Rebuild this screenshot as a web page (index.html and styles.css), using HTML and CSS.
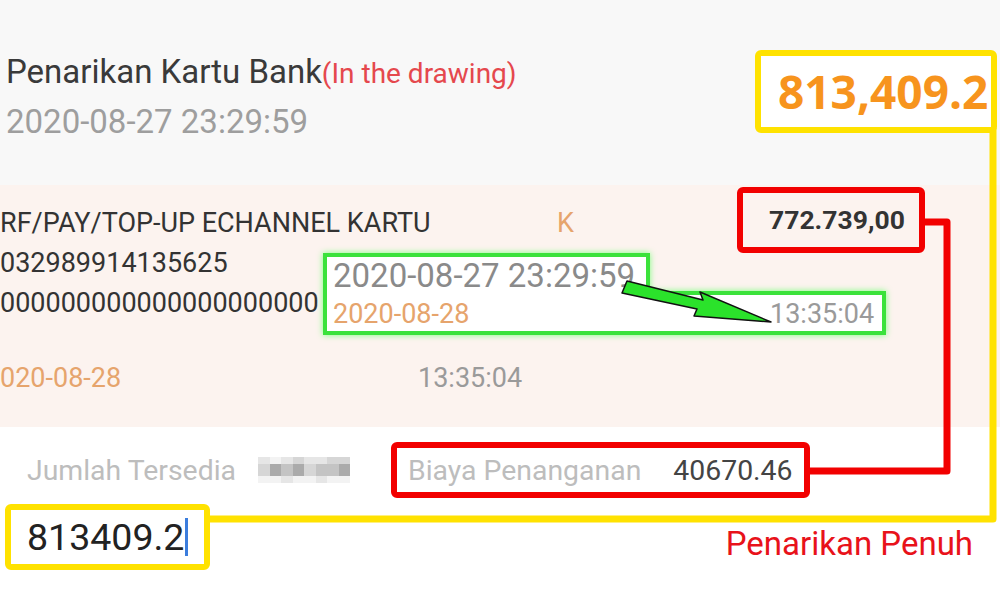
FILE: index.html
```html
<!DOCTYPE html>
<html lang="id">
<head>
  <meta charset="UTF-8">
  <meta name="viewport" content="width=device-width, initial-scale=1">
  <title>Penarikan Kartu Bank</title>
  <link rel="stylesheet" href="styles.css">
</head>
<body>
  <div class="screen">
    <header class="head">
      <div class="title">Penarikan Kartu Bank<span class="note">(In the drawing)</span></div>
      <div class="stamp">2020-08-27 23:29:59</div>
    </header>

    <section class="record">
      <div class="row">
        <span class="desc">RF/PAY/TOP-UP ECHANNEL KARTU</span>
        <span class="flag">K</span>
        <span class="amount">772.739,00</span>
      </div>
      <div class="row">032989914135625</div>
      <div class="row">000000000000000000000</div>
      <div class="row row-date">
        <span class="day">020-08-28</span>
        <span class="time">13:35:04</span>
      </div>
    </section>

    <section class="form">
      <div class="line">
        <span class="label avail">Jumlah Tersedia</span>
        <span class="blur">
          <i class="c2"></i><i class="c1"></i><i class="c2"></i><i class="c3"></i><i class="c2"></i><i class="c2"></i><i class="c3"></i><i class="c3"></i>
          <i class="c3"></i><i class="c5"></i><i class="c4"></i><i class="c5"></i><i class="c3"></i><i class="c4"></i><i class="c4"></i><i class="c5"></i>
          <i class="c1"></i><i class="c1"></i><i class="c2"></i><i class="c1"></i><i class="c1"></i><i class="c2"></i><i class="c1"></i><i class="c1"></i>
        </span>
        <span class="fee"><span class="label">Biaya Penanganan</span><span class="fee-val">40670.46</span></span>
      </div>
      <div class="line line-input">
        <div class="input">813409.2<span class="caret"></span></div>
        <span class="full">Penarikan Penuh</span>
      </div>
    </section>

    <!-- zoomed copy of the dates -->
    <div class="callout">
      <svg class="callout-frame" viewBox="0 0 563 82"><path d="M2 2H325V40H561V80H2Z"/></svg>
      <div class="callout-stamp">2020-08-27 23:29:59</div>
      <div class="callout-row">
        <span class="callout-day">2020-08-28</span>
        <span class="time">13:35:04</span>
      </div>
    </div>

    <svg class="links" viewBox="0 0 1000 600">
      <polyline class="link-yellow" points="993,128 993,519 206,519"/>
      <polyline class="link-red" points="922,222 947,222 947,471 810,471"/>
      <polygon class="arrow" points="627,281 703,300 700,292 771,322 694,316 697,309 622,293"/>
    </svg>

    <div class="total">813,409.2</div>
  </div>
</body>
</html>
```

FILE: styles.css
```css
:root { --kuning: #ffe200; --merah: #f20000; --oranye: #e6a46c; --abu: #9a9a9a; }
* { box-sizing: border-box; }
body { margin:0; font-family:Roboto, "Liberation Sans", sans-serif; }
.screen { position:relative; width:1000px; height:600px; overflow:hidden; background:#fff; }

.head { height:185px; padding:52px 0 0 6px; background:#f8f8f8; }
.title { font-size:33px; line-height:40px; color:#3a3a3a; }
.note { font-size:28px; color:#e5484d; }
.stamp { margin-top:8px; font-size:33px; line-height:40px; color:#9e9e9e; }

.record { height:242px; padding-top:18px; background:#fcf3ef; font-size:27px; color:#333; }
.row { display:flex; align-items:center; height:40px; line-height:40px; white-space:nowrap; }
.desc { flex:0 0 557px; }
.flag { flex:0 0 180px; color:var(--oranye); }
.amount { width:188px; height:66px; margin:-16px 0 -10px; padding-left:26px;
  border:6px solid var(--merah); border-radius:6px; line-height:54px; font-weight:700; font-size:26.5px; }
.row-date { margin-top:35px; }
.day { flex:0 0 418px; color:var(--oranye); }
.time { color:var(--abu); }

.form { padding-top:15px; }
.line { display:flex; align-items:center; }
.label { font-size:28.4px; color:#bdbdbd; }
.avail { margin-left:27px; }
.blur { display:grid; grid-template-columns:repeat(8, 11.5px); grid-template-rows:7px 12px 7px;
  margin-left:22px; }
.blur i { display:block; }
.c1 { background:#f3f3f3; }
.c2 { background:#e6e6e6; }
.c3 { background:#d6d6d6; }
.c4 { background:#c4c4c4; }
.c5 { background:#ababab; }
.fee { display:flex; align-items:center; width:419px; height:56px; margin-left:41px; padding-left:11px;
  border:6px solid var(--merah); border-radius:6px; }
.fee-val { margin-left:32px; font-size:28.4px; color:#444; }

.line-input { margin-top:6px; }
.input { display:flex; align-items:center; width:205px; height:66px; margin-left:5px; padding-left:16px;
  border:6px solid var(--kuning); border-radius:6px; font-size:37.5px; color:#222; }
.caret { width:3px; height:38px; margin-left:1px; background:#3b7ddd; }
.full { margin:12px 27px 0 auto; font-size:33px; color:#e8121a; }

.callout { position:absolute; left:323px; top:253px; width:563px; height:82px; padding:3px 0 0 10px; }
.callout-frame { position:absolute; left:0; top:0; width:563px; height:82px; overflow:visible;
  filter:drop-shadow(0 0 3px #7dff7d); }
.callout-frame path { fill:#fff; stroke:#3be23b; stroke-width:4; }
.callout-stamp { position:relative; font-size:33px; line-height:40px; color:#8a8a8a; }
.callout-row { position:relative; display:flex; margin-top:2px; font-size:27px; line-height:32px; }
.callout-day { flex:0 0 437px; color:var(--oranye); }

.links { position:absolute; left:0; top:0; width:1000px; height:600px; }
.links polyline { fill:none; stroke-width:7; stroke-linejoin:round; }
.link-yellow { stroke:var(--kuning); }
.link-red { stroke:var(--merah); }
.arrow { fill:#2be22b; stroke:#111; stroke-width:1.5; stroke-linejoin:round; }

.total { position:absolute; left:755px; top:50px; width:242px; height:83px; padding-left:17px;
  border:6px solid var(--kuning); border-radius:6px; background:#fff;
  font:700 46px/71px "Open Sans", sans-serif; color:#f7941d; }
```
